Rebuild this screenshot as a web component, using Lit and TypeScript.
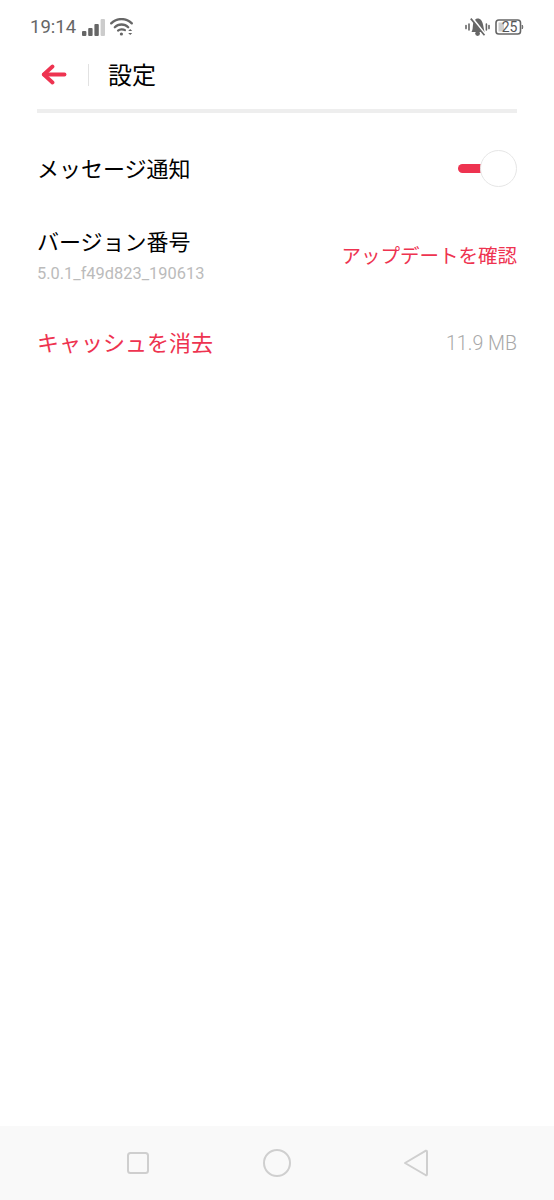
import { LitElement, html, css } from "lit";
import { customElement } from "lit/decorators.js";

@customElement("app-root")
export class AppRoot extends LitElement {
  static styles = css`
    :host {
      display: flex;
      flex-direction: column;
      width: 554px;
      height: 1200px;
      background: #fff;
      font-family: "Noto Sans CJK JP", "Noto Sans", sans-serif;
      color: #000;
      overflow: hidden;
    }
    .status {
      height: 54px;
      box-sizing: border-box;
      padding: 0 30px 0 30px;
      display: flex;
      align-items: center;
      color: #666;
    }
    .time {
      font: 400 18.5px/1 Roboto, sans-serif;
      color: #666;
      width: 52px;
    }
    .icon { display: block; flex: none; }
    .wifi { margin-left: 5px; }
    .spacer { flex: 1; }
    .battery { margin-left: 5px; }
    .bar {
      height: 42px;
      display: flex;
      align-items: center;
      padding-left: 41px;
    }
    .sep {
      width: 1px;
      height: 22px;
      background: #e2e2e2;
      margin: 0 19px 0 21px;
    }
    .title { font-size: 24px; line-height: 42px; font-weight: 400; color: #000; margin-bottom: 2px; }
    .rule {
      height: 4px;
      margin: 13px 37px 0;
      background: #eeeeee;
    }
    .row {
      display: flex;
      align-items: center;
      justify-content: space-between;
      padding: 0 37px 0 37px;
    }
    .r1 { height: 78px; margin-top: 15px; }
    .r2 { height: 78px; margin-top: 9px; }
    .r3 { height: 60px; margin-top: 18px; }
    .label { font-size: 22px; line-height: 32px; color: #000; }
    .label.red { color: #ee3350; }
    .sub { font: 400 16.4px/20px Roboto, sans-serif; color: #bbbbbb; margin-top: 8px; }
    .action { font-size: 19.5px; line-height: 28px; color: #ee3350; margin-top: 2px; }
    .size { font: 300 19.6px/24px Roboto, sans-serif; color: #a8a8a8; margin-top: 6px; }
    .switch { position: relative; width: 59px; height: 38px; flex: none; }
    .track {
      position: absolute;
      left: 0;
      top: 16px;
      width: 26px;
      height: 9px;
      border-radius: 5px;
      background: #ee3350;
    }
    .thumb {
      position: absolute;
      right: 0;
      top: 2px;
      width: 37px;
      height: 37px;
      box-sizing: border-box;
      border-radius: 50%;
      border: 1.5px solid #e6e6e6;
      background: #fff;
    }
    .main { flex: 1; }
    .nav {
      height: 74px;
      background: #f9f9f9;
      display: flex;
      align-items: center;
      padding-left: 126px;
    }
    .nav svg { display: block; flex: none; }
    .nav .c { margin-left: 113px; }
    .nav .t { margin-left: 112px; }
  `;

  render() {
    return html`
      <div class="status">
        <span class="time">19:14</span>
        <svg class="icon" width="23" height="18" viewBox="0 0 23 18">
          <rect x="0" y="13" width="4.4" height="5" rx="1" fill="#666" />
          <rect x="6.2" y="10" width="4.4" height="8" rx="1" fill="#666" />
          <rect x="12.4" y="6" width="4.4" height="12" rx="1" fill="#666" />
          <rect x="18.6" y="1" width="4.4" height="17" rx="1" fill="#ccc" />
        </svg>
        <svg class="icon wifi" width="23" height="18" viewBox="0 0 23 18" fill="none" stroke="#666" stroke-linecap="round">
          <path d="M1.2 5.4 C6.8 -0.4 16.2 -0.4 21.8 5.4" stroke-width="2.3" />
          <path d="M4.8 9.2 C8.4 5.6 14.6 5.6 18.2 9.2" stroke-width="2.3" />
          <path d="M8 12.6 C9.8 11 13.2 11 15 12.2" stroke-width="2.1" />
          <circle cx="11.4" cy="16" r="1.6" fill="#666" stroke="none" />
          <path d="M18.2 13 L20.2 11 L22.2 13 Z M18.2 15 L20.2 17 L22.2 15 Z" fill="#666" stroke="none" />
        </svg>
        <span class="spacer"></span>
        <svg class="icon" width="25" height="18" viewBox="0 0 25 18">
          <path d="M6.5 14 C8 12 7.6 9 8 6.5 C8.6 3 10.4 0.4 12.6 0.4 C15.8 0.4 17.4 3 18 6.5 L19.5 14 Z" fill="#666" />
          <circle cx="12.6" cy="15.6" r="2.4" fill="#666" />
          <path d="M6.5 -0.5 L20 16.5" stroke="#fff" stroke-width="2.6" />
          <path d="M5.8 0.6 L19.5 17.2" stroke="#666" stroke-width="1.7" />
          <path d="M4 6 v6 M1 7.6 v3 M21.4 6 v6 M24 7.6 v3" stroke="#666" stroke-width="1.6" stroke-linecap="round" />
        </svg>
        <svg class="icon battery" width="29" height="16" viewBox="0 0 29 16">
          <rect x="1" y="1" width="24.5" height="14" rx="2.8" fill="#fff" stroke="#666" stroke-width="1.6" />
          <rect x="3.5" y="3.5" width="5.5" height="9" fill="#cfcfcf" />
          <path d="M27.2 6 q1.4 2 0 4 z" fill="#666" stroke="#666" stroke-width="0.8" />
          <text x="14.5" y="13" text-anchor="middle" font-family="Roboto, sans-serif" font-size="14" fill="#555">25</text>
        </svg>
      </div>
      <div class="bar">
        <svg class="icon" width="26" height="22" viewBox="0 0 26 22" fill="none" stroke="#ee3350" stroke-width="3.8" stroke-linecap="round" stroke-linejoin="round">
          <path d="M11.5 2.5 L2.8 10.5 L11.5 18.5" />
          <path d="M3 10.5 H23.5" />
        </svg>
        <span class="sep"></span>
        <span class="title">設定</span>
      </div>
      <div class="rule"></div>
      <div class="row r1">
        <span class="label">メッセージ通知</span>
        <div class="switch"><span class="track"></span><span class="thumb"></span></div>
      </div>
      <div class="row r2">
        <div>
          <div class="label">バージョン番号</div>
          <div class="sub">5.0.1_f49d823_190613</div>
        </div>
        <span class="action">アップデートを確認</span>
      </div>
      <div class="row r3">
        <span class="label red">キャッシュを消去</span>
        <span class="size">11.9 MB</span>
      </div>
      <div class="main"></div>
      <div class="nav">
        <svg width="24" height="24" viewBox="0 0 24 24" fill="none" stroke="#cfcfcf" stroke-width="2">
          <rect x="2" y="2" width="20" height="20" rx="2.5" />
        </svg>
        <svg class="c" width="28" height="28" viewBox="0 0 28 28" fill="none" stroke="#cfcfcf" stroke-width="2">
          <circle cx="14" cy="14" r="13" />
        </svg>
        <svg class="t" width="26" height="28" viewBox="0 0 26 28" fill="none" stroke="#cfcfcf" stroke-width="2" stroke-linejoin="round">
          <path d="M2 14 L22.5 1.8 Q24 1.2 24 3 V25 Q24 26.8 22.5 26 Z" />
        </svg>
      </div>
    `;
  }
}
